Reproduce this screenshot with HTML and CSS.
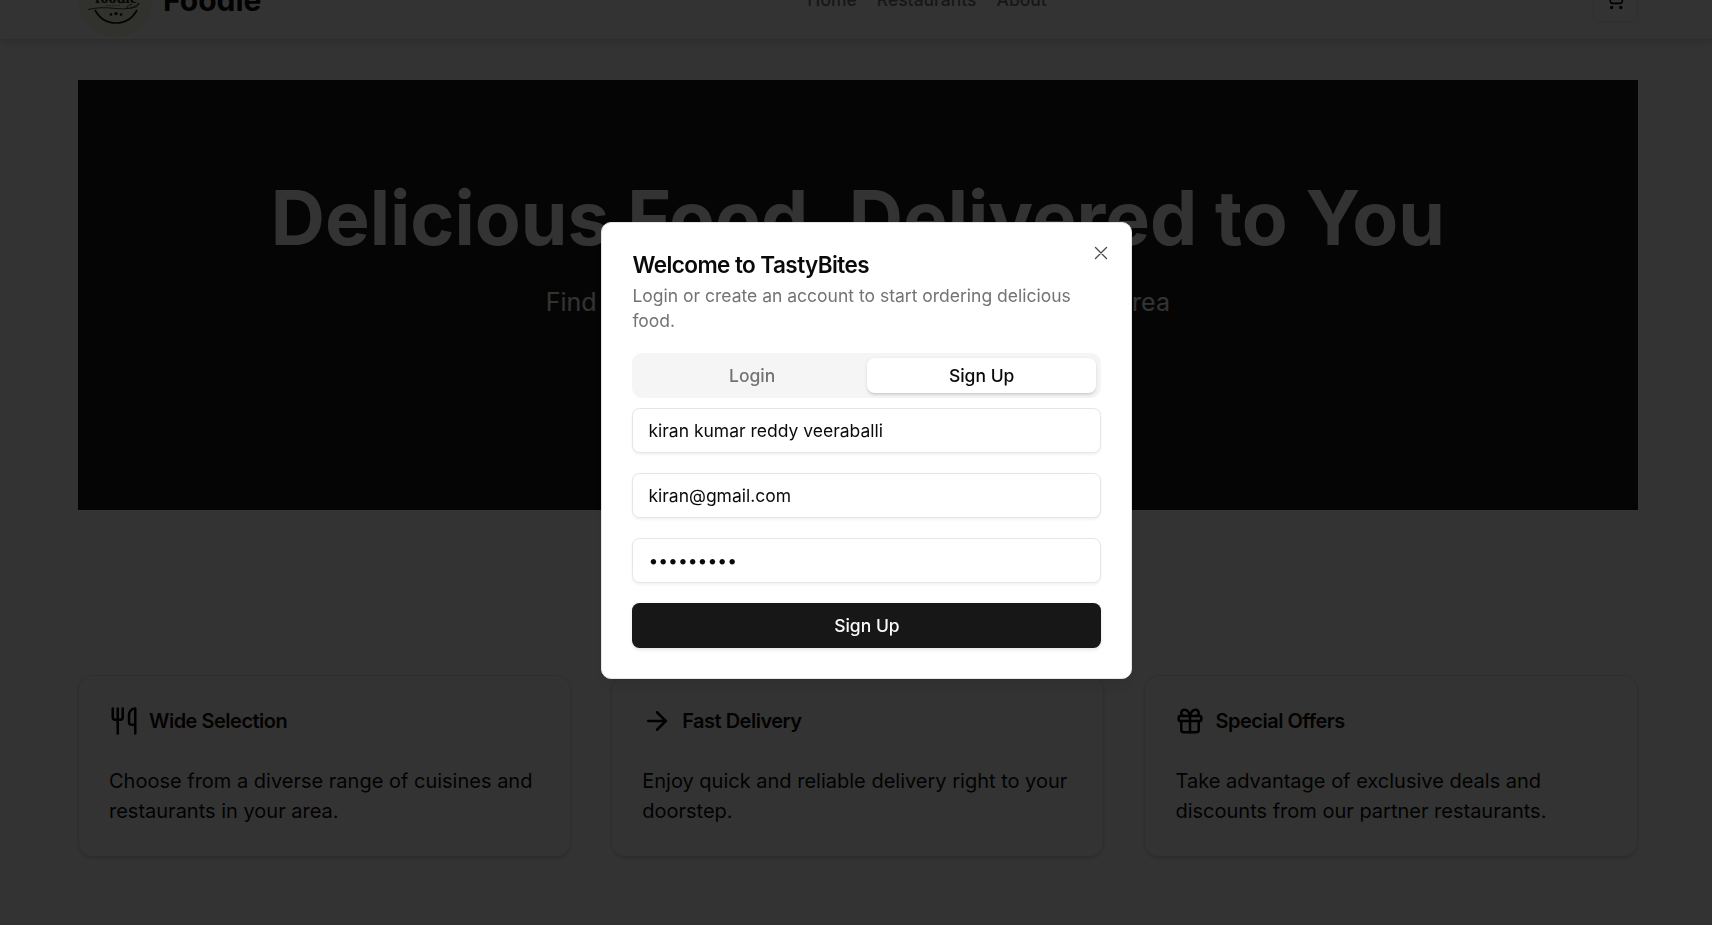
FILE: index.html
```html
<!DOCTYPE html>
<html lang="en">
<head>
<meta charset="utf-8">
<title>Foodie</title>
<link rel="stylesheet" href="styles.css">
</head>
<body>
<div class="page">
  <header class="header">
    <div class="brand">
      <svg class="logo" viewBox="0 0 75 75">
        <circle cx="37.5" cy="37.5" r="37.5" fill="#f6f3e0"/>
        <text x="38" y="40.500" text-anchor="middle" class="logo-text">foodie</text>
        <path d="M28 43.500h14" fill="none" stroke="#999" stroke-width="1" stroke-dasharray="2 1"/>
        <path d="M10 47.500 Q22 44.500 38 46.500 T61 41 Q61 46 50 46.500 Q46 45 54 42" fill="none" stroke="#444" stroke-width="1"/>
        <path d="M17 48 Q24 61 38 61 Q52 61 59 48" fill="none" stroke="#111" stroke-width="1.6"/>
        <circle cx="33" cy="52.500" r="1.300"/><circle cx="38" cy="51.600" r="1.700"/><circle cx="43" cy="52.500" r="1.300"/>
      </svg>
      <span class="brand-name">Foodie</span>
    </div>
    <nav class="nav"><a>Home</a><a>Restaurants</a><a>About</a></nav>
    <button class="cart" aria-label="Cart">
      <svg class="icon" width="20" height="20" viewBox="0 0 24 24"><circle cx="8" cy="21" r="1"/><circle cx="19" cy="21" r="1"/><path d="M2.050 2.050h2l2.660 12.420a2 2 0 0 0 2 1.580h9.780a2 2 0 0 0 1.950-1.570l1.650-7.430H5.120"/></svg>
    </button>
  </header>
  <main class="main">
    <section class="hero">
      <h1 class="hero-title">Delicious Food, Delivered to You</h1>
      <p class="hero-sub">Find and order from the best restaurants in your area</p>
    </section>
    <section class="cards">
      <article class="card">
        <h3 class="card-title"><svg class="icon" width="30" height="30" viewBox="0 0 24 24"><path d="M3 2v7c0 1.100.9 2 2 2h4a2 2 0 0 0 2-2V2"/><path d="M7 2v20"/><path d="M21 15V2a5 5 0 0 0-5 5v6c0 1.100.9 2 2 2h3Zm0 0v7"/></svg>Wide Selection</h3>
        <p class="card-text">Choose from a diverse range of cuisines and restaurants in your area.</p>
      </article>
      <article class="card">
        <h3 class="card-title"><svg class="icon" width="30" height="30" viewBox="0 0 24 24"><path d="M5 12h14"/><path d="m12 5 7 7-7 7"/></svg>Fast Delivery</h3>
        <p class="card-text">Enjoy quick and reliable delivery right to your doorstep.</p>
      </article>
      <article class="card">
        <h3 class="card-title"><svg class="icon" width="30" height="30" viewBox="0 0 24 24"><rect x="3" y="8" width="18" height="4" rx="1"/><path d="M12 8v13"/><path d="M19 12v7a2 2 0 0 1-2 2H7a2 2 0 0 1-2-2v-7"/><path d="M7.500 8a2.500 2.500 0 0 1 0-5A4.800 8 0 0 1 12 8a4.800 8 0 0 1 4.500-5 2.500 2.500 0 0 1 0 5"/></svg>Special Offers</h3>
        <p class="card-text">Take advantage of exclusive deals and discounts from our partner restaurants.</p>
      </article>
    </section>
  </main>
  <footer class="footer"></footer>
</div>
<div class="overlay"></div>
<div class="dialog" role="dialog">
  <h2 class="dialog-title">Welcome to TastyBites</h2>
  <p class="dialog-text">Login or create an account to start ordering delicious food.</p>
  <div class="tabs"><button class="tab">Login</button><button class="tab tab-active">Sign Up</button></div>
  <form class="form">
    <input class="field" type="text" value="kiran kumar reddy veeraballi">
    <input class="field" type="email" value="kiran@gmail.com">
    <input class="field" type="password" value="123456789">
    <button class="submit" type="button">Sign Up</button>
  </form>
  <svg class="close" width="20" height="20" viewBox="0 0 20 20"><path d="M4.500 4.500l11 11M15.500 4.500l-11 11"/></svg>
</div>
</body>
</html>
```
FILE: styles.css
```css
* { box-sizing: border-box; }
html, body { margin: 0; height: 925px; overflow: hidden; }
body, button, input { font-family: Inter, sans-serif; color: #0a0a0a; }
h1, h2, h3, p { margin: 0; }
button { border: 0; padding: 0; background: none; }
.page { height: 925px; width: 1715.7px; overflow: hidden; background: #fff; display: flex; flex-direction: column; }
.icon { fill: none; stroke: #000; stroke-width: 2; stroke-linecap: round; stroke-linejoin: round; flex: none; }
.header { height: 79px; margin-top: -40px; flex: none; padding: 0 78px; display: flex; align-items: center; justify-content: space-between; box-shadow: 0 5px 7.5px -1px rgba(0,0,0,.1), 0 2.5px 5px -2.5px rgba(0,0,0,.1); }
.brand { display: flex; align-items: center; gap: 10px; }
.logo { width: 75px; height: 75px; }
.logo-text { font: bold 16px "Liberation Serif", serif; fill: #222; }
.brand-name { font-size: 30px; font-weight: 700; line-height: 40px; }
.nav { display: flex; gap: 20px; font-size: 17.5px; font-weight: 500; }
.nav a { color: #737373; }
.cart { width: 45px; height: 45px; border: 1px solid #e5e5e5; border-radius: 7.5px; display: flex; align-items: center; justify-content: center; }
.main { padding: 41px 78px 0; flex: 1; }
.hero { height: 430px; background: #191919; color: #fff; padding-top: 100px; text-align: center; }
.hero-title { font-size: 75px; font-weight: 700; line-height: 75px; }
.hero-sub { margin-top: 30px; font-size: 25px; line-height: 35px; }
.cards { margin-top: 165px; display: grid; grid-template-columns: repeat(3, 1fr); gap: 40px; }
.card { height: 182px; border: 1px solid #e5e5e5; border-radius: 15px; padding: 30px; box-shadow: 0 1.25px 3.75px rgba(0,0,0,.1), 0 1.25px 2.5px -1px rgba(0,0,0,.1); }
.card-title { display: flex; align-items: center; gap: 10px; font-size: 20px; font-weight: 600; letter-spacing: -.5px; line-height: 30px; }
.card-text { margin-top: 30px; font-size: 20px; line-height: 30px; }
.footer { height: 2px; background: #fff1f2; }
.overlay { position: fixed; inset: 0; background: rgba(0,0,0,.8); }
.dialog { position: fixed; left: 601.4px; top: 221.5px; width: 531px; height: 457px; border: 1px solid #e5e5e5; border-radius: 10px; background: #fff; padding: 30px 30px 0; box-shadow: 0 12px 19px -4px rgba(0,0,0,.1); }
.dialog-title { font-size: 22.5px; line-height: 23px; font-weight: 600; letter-spacing: -.5625px; }
.dialog-text { margin-top: 7px; font-size: 17.5px; line-height: 25px; color: #737373; }
.tabs { margin-top: 20px; height: 45px; padding: 5px; border-radius: 10px; background: #f5f5f5; display: grid; grid-template-columns: 1fr 1fr; }
.tab { font-size: 17.5px; font-weight: 500; color: #737373; border-radius: 7.5px; }
.tab-active { background: #fff; color: #0a0a0a; box-shadow: 0 1.25px 3.75px rgba(0,0,0,.1), 0 1.25px 2.5px -1px rgba(0,0,0,.1); }
.form { margin-top: 10px; display: grid; gap: 20px; }
.field { width: 100%; height: 45px; border: 1px solid #e5e5e5; border-radius: 7.5px; padding: 0 15px; font-size: 17.5px; background: #fff; box-shadow: 0 1.25px 2.5px rgba(0,0,0,.05); outline: 0; }
.submit { height: 45px; border-radius: 7.5px; background: #171717; color: #fafafa; font-size: 17.5px; font-weight: 500; box-shadow: 0 1.25px 3.75px rgba(0,0,0,.1); }
.close { position: absolute; right: 20px; top: 20px; opacity: .75; fill: none; stroke: #0a0a0a; stroke-width: 1.3; stroke-linecap: round; }
```
